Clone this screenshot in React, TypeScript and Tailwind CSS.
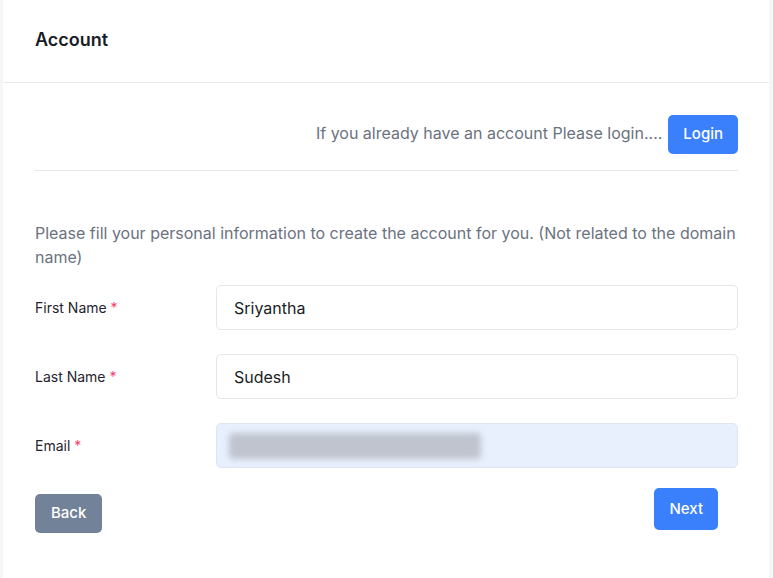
import { FC } from 'react';

interface FieldProps {
  label: string;
  value: string;
  autofilled?: boolean;
}

const Field: FC<FieldProps> = ({ label, value, autofilled }) => {
  return (
    <div className="flex items-center">
      <label className="w-[181px] shrink-0 text-[14px] text-[#1f2430]">
        {label} <span className="text-[#f1416c]">*</span>
      </label>
      <div
        className={`flex h-[45px] flex-1 items-center rounded-[5px] border px-[17px] text-[16px] text-[#1a1d24] ${
          autofilled ? 'border-[#dfe5ef] bg-[#e8f0fe]' : 'border-[#e4e6ea] bg-white'
        }`}>
        {autofilled ? (
          <span className="-ml-[5px] block h-[26px] w-[252px] rounded-sm bg-[#bfc4ce] blur-[3px]" />
        ) : (
          value
        )}
      </div>
    </div>
  );
};

const App: FC = () => {
  return (
    <div className="min-h-[578px] bg-[#f5f6f8] pl-[3px] pr-[4px] font-['Inter','Liberation_Sans',sans-serif]">
      <div className="min-h-[578px] bg-white">
        <div className="flex h-[83px] items-center border-b border-[#e9eaec] px-[32px] pb-[4px]">
          <h1 className="text-[18px] font-semibold text-[#181c25]">Account</h1>
        </div>

        <div className="pl-[32px] pr-[31px] pt-[32px]">
          <div className="flex items-center justify-end gap-[6px] border-b border-[#e6e7ea] pb-[16px]">
            <span className="pb-[3px] text-[16px] text-[#6b7280]">
              If you already have an account Please login....
            </span>
            <button className="h-[39px] rounded-[5px] bg-[#3a80fc] px-[15px] text-[15px] font-medium text-white">
              Login
            </button>
          </div>

          <p className="mt-[50px] text-[16px] leading-[24px] text-[#6b7280]">
            Please fill your personal information to create the account for you. (Not related to the
            domain name)
          </p>

          <div className="mt-[16px] flex flex-col gap-[24px]">
            <Field label="First Name" value="Sriyantha" />
            <Field label="Last Name" value="Sudesh" />
            <Field label="Email" value="" autofilled />
          </div>

          <div className="mt-[20px] flex items-start justify-between">
            <button className="mt-[6px] h-[39px] rounded-[5px] bg-[#718299] px-[16px] text-[15px] font-medium text-white">
              Back
            </button>
            <button className="mr-[20px] h-[42px] rounded-[5px] bg-[#3a80fc] px-[15px] text-[15px] font-medium text-white">
              Next
            </button>
          </div>
        </div>
      </div>
    </div>
  );
};

export default App;
